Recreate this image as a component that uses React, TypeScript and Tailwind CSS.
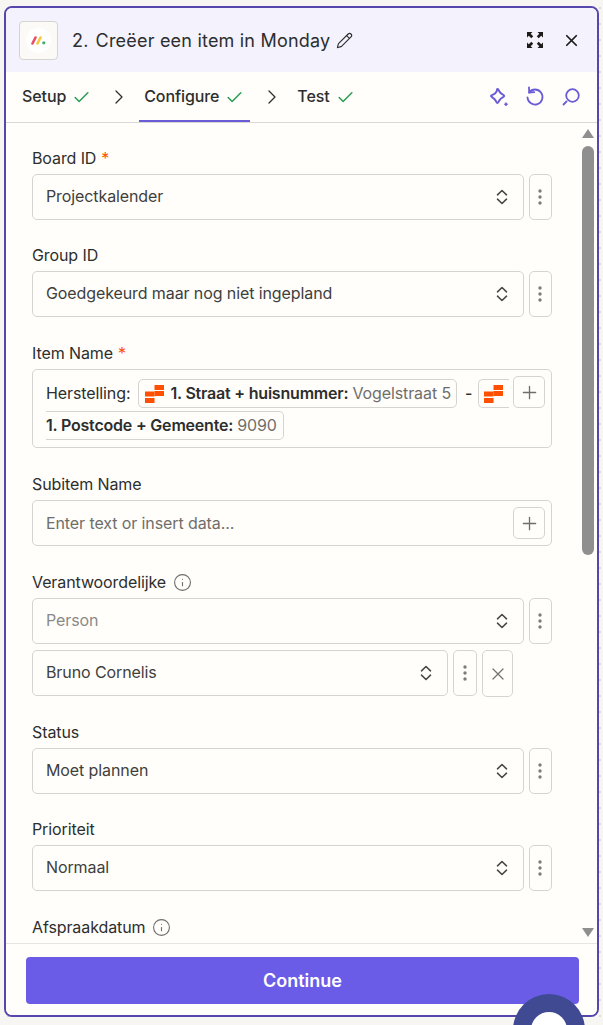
import React from 'react'
import { Check, ChevronRight, Pencil, Plus, X, Info } from 'lucide-react'

const font = { fontFamily: 'Inter, "Noto Sans", sans-serif' }

const ZapIcon = () => (
    <svg width="19" height="18" viewBox="0 0 19 18" className="shrink-0">
        <rect x="9.500" y="0" width="9.500" height="5" fill="#ff4f00" />
        <rect x="0" y="6.500" width="9.500" height="5" fill="#ff4f00" />
        <rect x="9.500" y="6" width="9.500" height="5" fill="#ff4f00" />
        <rect x="0" y="13" width="9.500" height="5" fill="#ff4f00" />
    </svg>
)

const UpDown = () => (
    <svg width="12" height="16" viewBox="0 0 12 16" fill="none" stroke="#4b4a48" strokeWidth="1.600" strokeLinecap="round" strokeLinejoin="round" className="shrink-0">
        <path d="M1.500 5.800L6 1.500L10.500 5.800" />
        <path d="M1.500 10.200L6 14.500L10.500 10.200" />
    </svg>
)

const Dots = ({ className = '' }: { className?: string }) => (
    <button className={`flex h-[46px] shrink-0 items-center justify-center rounded-[5px] border border-[#d6d4d0] bg-[#fffefb] pr-px ${className}`}>
        <svg width="4" height="16" viewBox="0 0 4 16" fill="#7d7c79">
            <circle cx="2" cy="2" r="1.700" />
            <circle cx="2" cy="8" r="1.700" />
            <circle cx="2" cy="14" r="1.700" />
        </svg>
    </button>
)

const Select = ({ value, muted, className = '' }: { value: string; muted?: boolean; className?: string }) => (
    <div className={`flex h-[46px] items-center justify-between rounded-[5px] border border-[#d6d4d0] bg-[#fffefb] pl-[13px] pr-[15px] text-[16px] tracking-[-0.1px] ${muted ? 'text-[#8b8a87]' : 'text-[#403f3e]'} ${className}`}>
        <span className="mb-[2px]">{value}</span>
        <UpDown />
    </div>
)

const Label = ({ text, required, info }: { text: string; required?: boolean; info?: boolean }) => (
    <div className="flex h-5 items-center gap-[5px] text-[16px] leading-5 tracking-[-0.1px] text-[#2d2e2e]">
        <span>{text}</span>
        {required && <span className="text-[#ff4f00]">*</span>}
        {info && <Info size={19} strokeWidth={1.400} className="ml-[2px] text-[#6f6e6b]" />}
    </div>
)

const SelectRow = ({ value, muted }: { value: string; muted?: boolean }) => (
    <div className="flex gap-[5px]">
        <Select value={value} muted={muted} className="flex-1" />
        <Dots className="w-[23px]" />
    </div>
)

const PlusButton = () => (
    <button className="flex size-[32px] shrink-0 items-center justify-center rounded-[5px] border border-[#d6d4d0] bg-[#fffefb] text-[#6f6e6b]">
        <Plus size={21} strokeWidth={1.500} />
    </button>
)

const TabStep = ({ name, active, className = '' }: { name: string; active?: boolean; className?: string }) => (
    <div className={`flex h-[50px] items-center text-[16px] font-medium tracking-[-0.1px] text-[#2d2e2e] ${active ? 'border-b-2 border-[#6a5bd7]' : 'pb-[2px]'} ${className}`}>
        <span>{name}</span>
        <Check size={19} strokeWidth={2} className="ml-[6px] mt-[2px] text-[#2e9e55]" />
    </div>
)

const corner = 'M1 1h5.500L4.700 2.800 7.200 5.300 5.300 7.200 2.800 4.700 1 6.500z'

export default function App() {
    return (
        <div
            style={font}
            className="relative h-[1025px] w-[603px] overflow-hidden bg-[#f7f6f3] bg-[radial-gradient(#dedcd8_1px,transparent_1px)] bg-[size:16px_16px] pl-[4px] pr-[4px] pt-[6px]"
        >
            <div className="flex h-[1011px] flex-col overflow-hidden rounded-[8px] border-2 border-[#5547ad] bg-[#fffefb]">
                {/* Header */}
                <div className="flex h-[64px] shrink-0 items-center bg-[#f3f2fd] pl-[13px] pr-[16px]">
                    <div className="flex size-[39px] items-center justify-center rounded-[4px] border border-[#d6d4d0] bg-[#fbfaf6]">
                        <div className="flex size-[25px] items-center justify-center rounded-full bg-white">
                            <svg width="15" height="9" viewBox="0 0 15 9">
                                <line x1="1.500" y1="7.500" x2="4.500" y2="1.500" stroke="#e8506a" strokeWidth="2.600" strokeLinecap="round" />
                                <line x1="6.500" y1="7.500" x2="9.500" y2="1.500" stroke="#f5c93f" strokeWidth="2.600" strokeLinecap="round" />
                                <circle cx="12.800" cy="6.800" r="1.600" fill="#3fae6e" />
                            </svg>
                        </div>
                    </div>
                    <div className="ml-[14px] flex items-center text-[18px] tracking-[0.2px] text-[#2d2e2e]">
                        <span>2.</span>
                        <span className="ml-[7px]">Creëer een item in Monday</span>
                        <Pencil size={17} strokeWidth={1.600} className="ml-[6px]" />
                    </div>
                    <div className="ml-auto flex items-center gap-[18px]">
                        <svg width="18" height="18" viewBox="0 0 18 18" fill="#1d1c1a">
                            <path d={corner} />
                            <path d={corner} transform="rotate(90 9 9)" />
                            <path d={corner} transform="rotate(180 9 9)" />
                            <path d={corner} transform="rotate(270 9 9)" />
                        </svg>
                        <X size={19} strokeWidth={2.200} className="text-[#1d1c1a]" />
                    </div>
                </div>

                {/* Steps */}
                <div className="flex h-[51px] shrink-0 items-center border-b border-[#d9d8d5] pl-[16px] pr-[16px]">
                    <TabStep name="Setup" />
                    <ChevronRight size={24} strokeWidth={1.300} className="ml-[16px] text-[#2d2e2e]" />
                    <TabStep name="Configure" active className="ml-[8px] pl-[5px] pr-[6px]" />
                    <ChevronRight size={24} strokeWidth={1.300} className="ml-[10px] text-[#2d2e2e]" />
                    <TabStep name="Test" className="ml-[13px]" />
                    <div className="ml-auto flex items-center gap-[16px] text-[#6a5bd7]">
                        <svg width="20" height="20" viewBox="0 0 20 20" fill="none" stroke="currentColor" strokeWidth="2" strokeLinejoin="round">
                            <path d="M8.500 2c.9 0 1 .7 1.800 2.300.8 1.500 1.700 2.300 3.200 3.100 1.400.7 1.700 1 1.700 1.600s-.6 1-1.900 1.600c-1.600.8-2.300 1.600-3.100 3.100-.7 1.500-1 2.300-1.700 2.300s-1-.8-1.800-2.300c-.8-1.500-1.600-2.300-3.100-3.100C3.200 10 2 9.600 2 9s1.200-1 2.600-1.600c1.500-.8 2.300-1.600 3-3.100C8.400 2.700 7.800 2 8.500 2z" />
                            <path d="M17 15.500v3.500M15.300 17.200h3.400" strokeWidth="1.500" />
                        </svg>
                        <svg width="20" height="22" viewBox="0 0 20 22" fill="none" stroke="currentColor" strokeWidth="1.800" strokeLinecap="round" strokeLinejoin="round">
                            <path d="M4 6.500a7.500 7.500 0 1 1-1.500 5" />
                            <path d="M4 1.500l.2 5 5-.3" />
                        </svg>
                        <svg width="20" height="20" viewBox="0 0 20 20" fill="none" stroke="currentColor" strokeWidth="1.800" strokeLinecap="round">
                            <circle cx="11.500" cy="8.500" r="6.300" />
                            <path d="M5.500 14.500L2.500 17.500" />
                        </svg>
                    </div>
                </div>

                {/* Form + scrollbar */}
                <div className="flex min-h-0 flex-1">
                    <div className="min-w-0 flex-1 overflow-hidden pl-[26px] pr-[30px] pt-[25px]">
                        <div className="flex flex-col gap-[25px]">
                            <div className="flex flex-col gap-[6px]">
                                <Label text="Board ID" required />
                                <SelectRow value="Projectkalender" />
                            </div>
                            <div className="flex flex-col gap-[6px]">
                                <Label text="Group ID" />
                                <SelectRow value="Goedgekeurd maar nog niet ingepland" />
                            </div>
                            <div className="mt-px flex flex-col gap-[6px]">
                                <Label text="Item Name" required />
                                <div className="relative h-[79px] rounded-[5px] border border-[#d6d4d0] bg-[#fffefb] pl-[13px] pt-[9px] text-[16px] tracking-[-0.1px] text-[#2d2e2e]">
                                    <div className="flex h-[29px] items-center">
                                        <span className="mb-[2px]">Herstelling:</span>
                                        <div className="ml-[8px] flex h-[29px] items-center rounded-[5px] border border-[#d6d4d0] pl-[6px] pr-[5px]">
                                            <ZapIcon />
                                            <span className="mb-[2px] ml-[6px] font-semibold tracking-[-0.2px]">1. Straat + huisnummer:</span>
                                            <span className="mb-[2px] ml-[4px] text-[#6f6e6b]">Vogelstraat 5</span>
                                        </div>
                                        <span className="mb-[2px] ml-[8px] font-medium">-</span>
                                        <div className="ml-[6px] flex h-[29px] w-[31px] items-center rounded-l-[5px] border-y border-l border-[#d6d4d0] pl-[5px]">
                                            <ZapIcon />
                                        </div>
                                    </div>
                                    <div className="mt-[3px] flex h-[29px] w-[238px] items-center rounded-r-[5px] border-y border-r border-[#d6d4d0]">
                                        <span className="mb-[2px] font-semibold tracking-[-0.2px]">1. Postcode + Gemeente:</span>
                                        <span className="mb-[2px] ml-[4px] text-[#6f6e6b]">9090</span>
                                    </div>
                                    <div className="absolute right-[6px] top-[6px]">
                                        <PlusButton />
                                    </div>
                                </div>
                            </div>
                            <div className="mt-px flex flex-col gap-[6px]">
                                <Label text="Subitem Name" />
                                <div className="flex h-[46px] items-center justify-between rounded-[5px] border border-[#d6d4d0] pl-[13px] pr-[6px] text-[16px] tracking-[-0.1px] text-[#6f6e6b]">
                                    <span>Enter text or insert data...</span>
                                    <PlusButton />
                                </div>
                            </div>
                            <div className="mt-px flex flex-col gap-[6px]">
                                <Label text="Verantwoordelijke" info />
                                <SelectRow value="Person" muted />
                                <div className="flex items-start gap-[5px]">
                                    <Select value="Bruno Cornelis" className="w-[416px]" />
                                    <Dots className="w-[24px]" />
                                    <button className="flex h-[47px] w-[31px] items-center justify-center rounded-[5px] border border-[#d6d4d0] text-[#757472]">
                                        <X size={20} strokeWidth={1.500} />
                                    </button>
                                </div>
                            </div>
                            <div className="flex flex-col gap-[6px]">
                                <Label text="Status" />
                                <SelectRow value="Moet plannen" />
                            </div>
                            <div className="flex flex-col gap-[6px]">
                                <Label text="Prioriteit" />
                                <SelectRow value="Normaal" />
                            </div>
                            <div className="mt-px">
                                <Label text="Afspraakdatum" info />
                            </div>
                        </div>
                    </div>
                    <div className="flex w-[15px] shrink-0 flex-col items-start pt-[6px]">
                        <div className="h-0 w-0 border-x-[6px] border-b-[9px] border-x-transparent border-b-[#8f8f8f]" />
                        <div className="mt-[8px] h-[409px] w-[12px] shrink-0 rounded-full bg-[#8f8f8f]" />
                        <div className="mt-[373px] h-0 w-0 border-x-[6px] border-t-[9px] border-x-transparent border-t-[#8f8f8f]" />
                    </div>
                </div>

                {/* Footer */}
                <div className="h-[72px] shrink-0 border-t border-[#e6e5e2] bg-[#fffefb] pl-[20px] pr-[18px] pt-[13px]">
                    <button className="flex h-[47px] w-full items-center justify-center rounded-[4px] bg-[#6a5ce6] text-[18px] font-semibold text-white">
                        Continue
                    </button>
                </div>
            </div>

            {/* Chat bubble */}
            <div className="absolute left-[513px] top-[994px] flex size-[72px] justify-center rounded-full bg-[#3f4a93] pt-[18px]">
                <div className="size-[36px] rounded-full bg-white" />
            </div>
        </div>
    )
}
